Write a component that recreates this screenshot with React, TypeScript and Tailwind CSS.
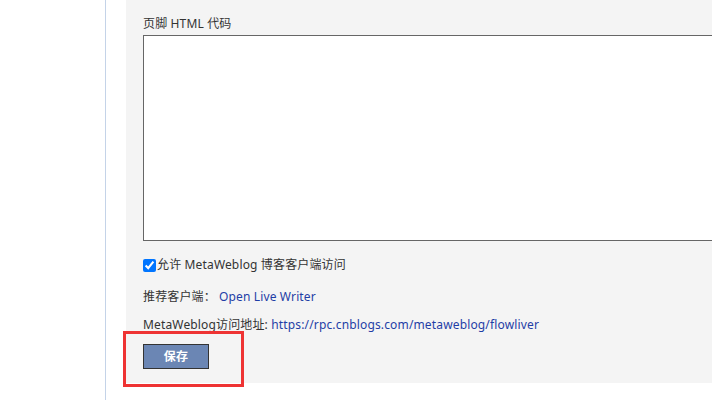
import React from "react";

export default function App() {
  const font = { fontFamily: '"Noto Sans", "Noto Sans CJK SC", sans-serif' };
  return (
    <div
      className="relative w-[712px] h-[400px] bg-white overflow-hidden flex text-[12px] text-[#333] tracking-[0.15px]"
      style={font}
    >
      <div className="w-[105px] shrink-0" />
      <div className="w-px h-full bg-[#c4d3e8] shrink-0" />
      <div className="w-[20px] shrink-0" />
      <div className="flex-1 h-[383px] bg-[#f4f4f4] overflow-hidden pl-[17px]">
        <div className="mt-[14px] h-[20px] leading-[20px]">页脚 HTML 代码</div>
        <div className="mt-px w-[620px] h-[206px] border border-[#666] bg-white" />
        <label className="mt-[14px] h-[20px] flex items-center">
          <input
            type="checkbox"
            defaultChecked
            className="m-0 w-[13px] h-[13px] accent-[#0075ff]"
          />
          <span className="ml-px">允许 MetaWeblog 博客客户端访问</span>
        </label>
        <div className="mt-[12px] h-[20px] leading-[20px]">
          推荐客户端：<span className="ml-[3px] text-[#1f3ea6]">Open Live Writer</span>
        </div>
        <div className="mt-[8px] h-[20px] leading-[20px]">
          MetaWeblog访问地址: <span className="text-[#1f3ea6]">https://rpc.cnblogs.com/metaweblog/flowliver</span>
        </div>
        <button className="mt-[9px] w-[66px] h-[25px] bg-[#6b86b4] border border-[#333] text-white font-bold text-[12px] flex items-center justify-center">
          保存
        </button>
      </div>
      <div className="absolute left-[123px] top-[331px] w-[121px] h-[56px] border-[3px] border-[#ee3333]" />
    </div>
  );
}
